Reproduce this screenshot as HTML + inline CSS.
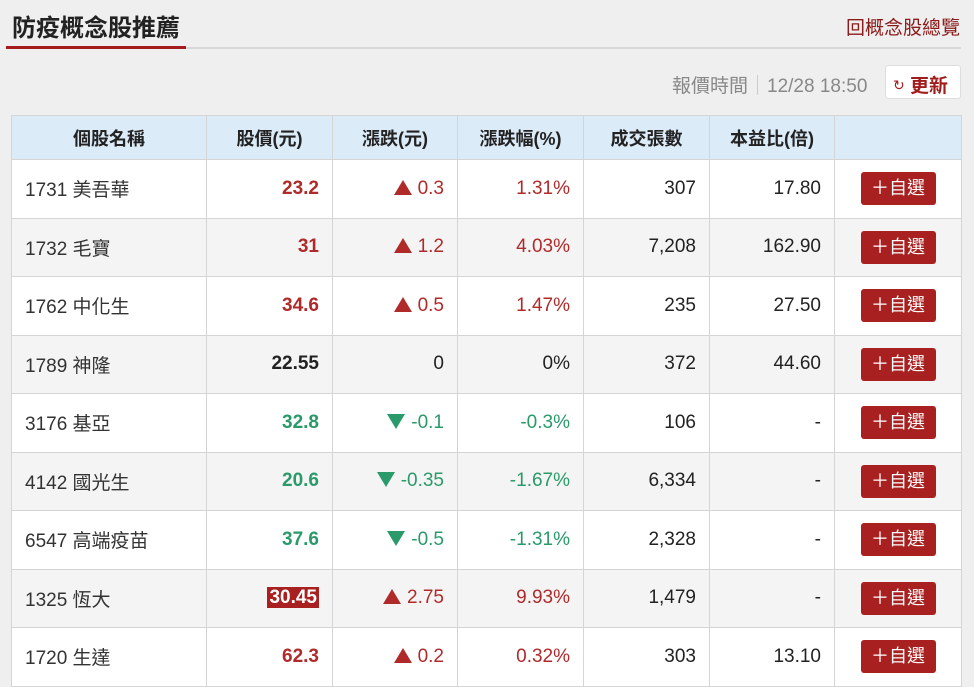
<!DOCTYPE html>
<html><head><meta charset="utf-8"><style>
*{box-sizing:border-box;margin:0;padding:0}
body{width:974px;height:681px;overflow:hidden;background:#efefef;font-family:"Liberation Sans","Noto Sans CJK TC",sans-serif;color:#333;position:relative}
.title{position:absolute;left:12px;top:8px;font-size:24px;font-weight:bold;color:#222}
.line{position:absolute;left:11px;top:47px;width:950px;height:2px;background:#d8d8d8}
.line2{position:absolute;left:6px;top:46px;width:180px;height:3px;background:#a31c1c}
.back{position:absolute;right:14px;top:13px;font-size:19px;color:#8b1a1a}
.time{position:absolute;left:672px;top:71px;font-size:19px;color:#888}
.sep{display:inline-block;width:1px;height:20px;background:#ccc;margin:0 9px;vertical-align:-3px}
.upd{position:absolute;left:885px;top:65px;width:76px;height:34px;background:#fff;border:1px solid #ddd;border-radius:3px;color:#a31c1c;font-size:19px;font-weight:bold;padding:5px 0 0 7px}
.upd small{font-size:14px;font-weight:normal;vertical-align:2px}
table{position:absolute;left:11px;top:115px;width:951px;border-collapse:collapse;font-size:19px}
th{background:#dcebf8;height:44px;font-weight:bold;color:#222;border:1px solid #d5d5d5;font-size:18px}
td{height:58.5px;border:1px solid #d5d5d5;text-align:right;padding-right:13px}
tr:nth-child(odd) td{background:#f4f4f4}
tr:nth-child(even) td{background:#fff}
td.n{text-align:left;padding-left:13px;color:#333}
.r{color:#b02a2a}.g{color:#2a9a6a}.k{color:#222}
.b{font-weight:bold}
.u::before{content:"";display:inline-block;border-left:9px solid transparent;border-right:9px solid transparent;border-bottom:15px solid #b02a2a;margin-right:6px;vertical-align:-1px}
.d::before{content:"";display:inline-block;border-left:9px solid transparent;border-right:9px solid transparent;border-top:15px solid #2a9a6a;margin-right:6px;vertical-align:-1px}
.btn{display:inline-block;background:#a8201f;color:#fff;border-radius:3px;width:75px;height:33px;line-height:33px;text-align:center;font-size:18px}
td.c{text-align:center;padding:0}
.hl{background:#a8201f;color:#fff;padding:0 2px}
</style></head><body>
<div class="title">防疫概念股推薦</div>
<div class="line"></div><div class="line2"></div>
<div class="back">回概念股總覽</div>
<div class="time">報價時間<span class="sep"></span>12/28 18:50</div>
<div class="upd"><small>↻</small> 更新</div>
<table>
<tr><th style="width:195px">個股名稱</th><th style="width:126px">股價(元)</th><th style="width:125px">漲跌(元)</th><th style="width:126px">漲跌幅(%)</th><th style="width:126px">成交張數</th><th style="width:125px">本益比(倍)</th><th></th></tr>
<tr><td class="n">1731 美吾華</td><td class="r b">23.2</td><td class="r u">0.3</td><td class="r">1.31%</td><td class="k">307</td><td class="k">17.80</td><td class="c"><span class="btn">＋自選</span></td></tr>
<tr><td class="n">1732 毛寶</td><td class="r b">31</td><td class="r u">1.2</td><td class="r">4.03%</td><td class="k">7,208</td><td class="k">162.90</td><td class="c"><span class="btn">＋自選</span></td></tr>
<tr><td class="n">1762 中化生</td><td class="r b">34.6</td><td class="r u">0.5</td><td class="r">1.47%</td><td class="k">235</td><td class="k">27.50</td><td class="c"><span class="btn">＋自選</span></td></tr>
<tr><td class="n">1789 神隆</td><td class="k b">22.55</td><td class="k">0</td><td class="k">0%</td><td class="k">372</td><td class="k">44.60</td><td class="c"><span class="btn">＋自選</span></td></tr>
<tr><td class="n">3176 基亞</td><td class="g b">32.8</td><td class="g d">-0.1</td><td class="g">-0.3%</td><td class="k">106</td><td class="k">-</td><td class="c"><span class="btn">＋自選</span></td></tr>
<tr><td class="n">4142 國光生</td><td class="g b">20.6</td><td class="g d">-0.35</td><td class="g">-1.67%</td><td class="k">6,334</td><td class="k">-</td><td class="c"><span class="btn">＋自選</span></td></tr>
<tr><td class="n">6547 高端疫苗</td><td class="g b">37.6</td><td class="g d">-0.5</td><td class="g">-1.31%</td><td class="k">2,328</td><td class="k">-</td><td class="c"><span class="btn">＋自選</span></td></tr>
<tr><td class="n">1325 恆大</td><td class="b"><span class="hl">30.45</span></td><td class="r u">2.75</td><td class="r">9.93%</td><td class="k">1,479</td><td class="k">-</td><td class="c"><span class="btn">＋自選</span></td></tr>
<tr><td class="n">1720 生達</td><td class="r b">62.3</td><td class="r u">0.2</td><td class="r">0.32%</td><td class="k">303</td><td class="k">13.10</td><td class="c"><span class="btn">＋自選</span></td></tr>
</table>
</body></html>
